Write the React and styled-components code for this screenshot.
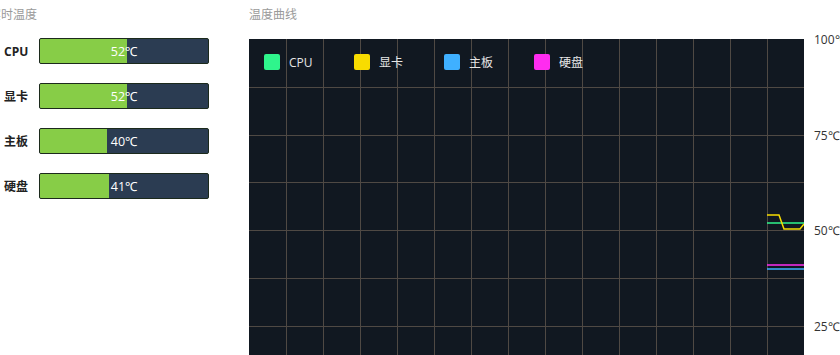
import React from "react";
import styled, { createGlobalStyle } from "styled-components";

const GlobalStyle = createGlobalStyle`
  body {
    margin: 0;
    background: #ffffff;
    overflow: hidden;
    font-family: "Open Sans", "Noto Sans CJK SC", sans-serif;
  }
`;

const sensors = [
  { name: "CPU", temp: 52, color: "#2ff58c" },
  { name: "显卡", temp: 52, color: "#f8dc00" },
  { name: "主板", temp: 40, color: "#3fb0ff" },
  { name: "硬盘", temp: 41, color: "#ff2cf0" },
];

const CHART_W = 555;
const CHART_H = 382;
const COL = 37;
const ROW = CHART_H / 8;

const Page = styled.div`
  display: flex;
  align-items: flex-start;
  width: 840px;
  height: 355px;
  overflow: hidden;
`;

const LeftPanel = styled.section`
  width: 249px;
  flex-shrink: 0;
`;

const Title = styled.div`
  height: 28px;
  line-height: 28px;
  font-size: 12px;
  color: #9a9a9a;
  font-family: "Noto Sans CJK SC", sans-serif;
  margin-left: ${(p) => p.$shift || 0}px;
  white-space: nowrap;
`;

const TempList = styled.div`
  display: flex;
  flex-direction: column;
  gap: 19px;
  margin-top: 10px;
`;

const TempRow = styled.div`
  display: flex;
  align-items: center;
  height: 26px;
`;

const RowLabel = styled.span`
  width: 35px;
  padding-left: 4px;
  font-size: 12px;
  font-weight: 700;
  color: #222;
  font-family: "Open Sans", "Noto Sans CJK SC", sans-serif;
`;

const Bar = styled.div`
  position: relative;
  width: 170px;
  height: 26px;
  box-sizing: border-box;
  border: 1px solid #1c2a1c;
  border-radius: 2px;
  background: #2b3c52;
  overflow: hidden;
`;

const BarFill = styled.div`
  height: 100%;
  background: #87cd47;
`;

const BarText = styled.span`
  position: absolute;
  inset: 0;
  display: flex;
  align-items: center;
  justify-content: center;
  color: #ffffff;
  font-size: 12.5px;
  font-family: "Open Sans", sans-serif;
`;

const RightPanel = styled.section`
  display: flex;
  flex-direction: column;
`;

const ChartRow = styled.div`
  display: flex;
  margin-top: 11px;
`;

const Plot = styled.div`
  position: relative;
  width: ${CHART_W}px;
  height: ${CHART_H}px;
  background: #111821;
  flex-shrink: 0;
`;

const Legend = styled.div`
  position: absolute;
  top: 15px;
  left: 15px;
  display: flex;
`;

const LegendItem = styled.div`
  display: flex;
  align-items: center;
  gap: 9px;
  width: 90px;
  height: 16px;
  font-size: 12px;
  color: #e6e6e6;
  font-family: "Open Sans", "Noto Sans CJK SC", sans-serif;
`;

const Swatch = styled.span`
  width: 16px;
  height: 16px;
  border-radius: 2px;
  background: ${(p) => p.$color};
`;

const Axis = styled.div`
  position: relative;
  width: 36px;
  height: ${CHART_H}px;
  margin-left: 10px;
`;

const AxisLabel = styled.span`
  position: absolute;
  left: 0;
  transform: translateY(-50%);
  font-size: 12px;
  color: #333;
  font-family: "Open Sans", sans-serif;
  white-space: nowrap;
`;

const yOf = (t) => CHART_H - (t / 100) * CHART_H;

function ChartGrid() {
  const cols = Array.from({ length: 14 }, (_, i) => (i + 1) * COL + 0.5);
  const rows = Array.from({ length: 7 }, (_, i) => Math.round((i + 1) * ROW) + 0.5);
  const x0 = 518;
  return (
    <svg width={CHART_W} height={CHART_H} style={{ display: "block" }}>
      {cols.map((x) => (
        <line key={"c" + x} x1={x} y1={0} x2={x} y2={CHART_H} stroke="#4f4944" strokeWidth="1" />
      ))}
      {rows.map((y) => (
        <line key={"r" + y} x1={0} y1={y} x2={CHART_W} y2={y} stroke="#4f4944" strokeWidth="1" />
      ))}
      <line x1={x0} y1={184} x2={CHART_W} y2={184} stroke={sensors[0].color} strokeWidth="1.5" />
      <polyline
        points={`${x0},176 530,176 535,190 551,190 555,185`}
        fill="none"
        stroke={sensors[1].color}
        strokeWidth="1.5"
      />
      <line x1={x0} y1={226} x2={CHART_W} y2={226} stroke={sensors[3].color} strokeWidth="1.5" />
      <line x1={x0} y1={230} x2={CHART_W} y2={230} stroke={sensors[2].color} strokeWidth="1.5" />
    </svg>
  );
}

export default function App() {
  return (
    <Page>
      <GlobalStyle />
      <LeftPanel>
        <Title $shift={-11}>实时温度</Title>
        <TempList>
          {sensors.map((s) => (
            <TempRow key={s.name}>
              <RowLabel>{s.name}</RowLabel>
              <Bar>
                <BarFill style={{ width: `${s.temp}%` }} />
                <BarText>{s.temp}℃</BarText>
              </Bar>
            </TempRow>
          ))}
        </TempList>
      </LeftPanel>
      <RightPanel>
        <Title>温度曲线</Title>
        <ChartRow>
          <Plot>
            <ChartGrid />
            <Legend>
              {sensors.map((s) => (
                <LegendItem key={s.name}>
                  <Swatch $color={s.color} />
                  {s.name}
                </LegendItem>
              ))}
            </Legend>
          </Plot>
          <Axis>
            {[100, 75, 50, 25, 0].map((t) => (
              <AxisLabel key={t} style={{ top: yOf(t) }}>
                {t}℃
              </AxisLabel>
            ))}
          </Axis>
        </ChartRow>
      </RightPanel>
    </Page>
  );
}
